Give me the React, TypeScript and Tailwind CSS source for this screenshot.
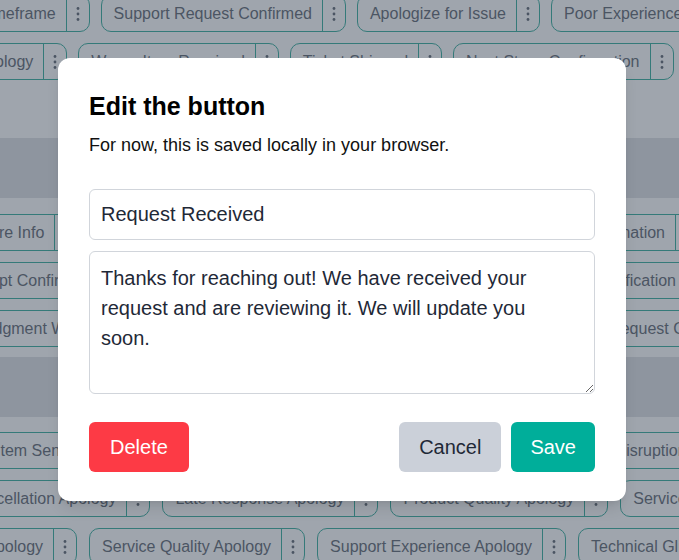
import React from "react";

type PillProps = { label: string; menu?: boolean };

const Kebab = () => (
  <svg width="4" height="16" viewBox="0 0 4 16" className="fill-current">
    <circle cx="2" cy="2.5" r="1.4" />
    <circle cx="2" cy="8" r="1.4" />
    <circle cx="2" cy="13.5" r="1.4" />
  </svg>
);

function Pill({ label, menu = true }: PillProps) {
  return (
    <div className="flex h-[37px] shrink-0 items-stretch rounded-[10px] border border-[#1f9e8f] text-[16px] text-[#4b5563]">
      <span className="flex items-center whitespace-nowrap pl-3 pr-2.5">{label}</span>
      {menu && (
        <span className="flex w-[23px] items-center justify-center border-l border-[#1f9e8f]">
          <Kebab />
        </span>
      )}
    </div>
  );
}

function Background() {
  return (
    <div className="h-[560px] w-full overflow-hidden bg-[#f3f4f6]">
      {/* top section */}
      <div className="flex h-[138px] flex-col gap-[11px]">
        <div className="-mt-[5px] -ml-[89px] flex gap-[11px]">
          <Pill label="Update Timeframe" />
          <Pill label="Support Request Confirmed" />
          <Pill label="Apologize for Issue" />
          <Pill label="Poor Experience Apology" />
        </div>
        <div className="-ml-[82px] flex gap-[11px]">
          <Pill label="Delay Apology" />
          <Pill label="Wrong Item Received" />
          <Pill label="Ticket Shipped" />
          <Pill label="Next Steps Confirmation" />
        </div>
      </div>

      <div className="h-[60px] bg-[#d1d5db]" />

      {/* middle section */}
      <div className="flex flex-col gap-[11px] pt-4 pb-[10px]">
        <div className="flex justify-between">
          <div className="-ml-[79px] flex gap-[11px]">
            <Pill label="Need More Info" />
            <Pill label="Order Status Update" />
          </div>
          <div className="-mr-[20px] flex gap-[11px]">
            <Pill label="Need Information" />
          </div>
        </div>
        <div className="flex justify-between">
          <div className="-ml-[55px] flex">
            <Pill label="Receipt Confirmation Sent" />
          </div>
          <div className="-mr-[31px] flex">
            <Pill label="Identity Verification" />
          </div>
        </div>
        <div className="flex justify-between">
          <div className="-ml-[88px] flex">
            <Pill label="Acknowledgment With Thanks" />
          </div>
          <div className="-mr-[102px] flex">
            <Pill label="Update Request Confirmed" />
          </div>
        </div>
      </div>

      <div className="h-[60px] bg-[#d1d5db]" />

      {/* bottom section */}
      <div className="flex flex-col gap-[11px] pt-[15px]">
        <div className="flex justify-between">
          <div className="-ml-[17px] flex">
            <Pill label="Item Sent Confirmation" />
          </div>
          <div className="-mr-[103px] flex">
            <Pill label="Service Disruption Apology" />
          </div>
        </div>
        <div className="-ml-[46px] flex gap-3">
          <Pill label="Cancellation Apology" />
          <Pill label="Late Response Apology" />
          <Pill label="Product Quality Apology" />
          <Pill label="Service Delay Apology" />
        </div>
        <div className="-ml-[74px] flex gap-3">
          <Pill label="Billing Apology" />
          <Pill label="Service Quality Apology" />
          <Pill label="Support Experience Apology" />
          <Pill label="Technical Glitch Apology" />
        </div>
      </div>
    </div>
  );
}

export default function App() {
  return (
    <div className="relative h-[560px] w-full overflow-hidden font-['Liberation_Sans',Arial,sans-serif]">
      <Background />

      {/* modal */}
      <div className="absolute inset-0 flex items-start bg-[rgba(75,85,99,0.5)] pt-[58px]">
        <div className="ml-[58px] w-[568px] rounded-xl bg-white px-[31px] pt-8 pb-[29px] shadow-lg">
          <h2 className="text-[25px] leading-8 font-bold text-black">Edit the button</h2>
          <p className="mt-[9px] text-[18px] leading-7 text-[#111]">
            For now, this is saved locally in your browser.
          </p>
          <input
            className="mt-[30px] block h-[51px] w-full rounded-md border border-[#d1d5db] px-[11px] text-xl text-[#1f2937] outline-none"
            defaultValue="Request Received"
          />
          <textarea
            className="mt-[11px] block h-[143px] w-full rounded-md border border-[#d1d5db] pt-[11px] pr-5 pb-2 pl-[11px] text-xl leading-[30px] text-[#1f2937] outline-none"
            defaultValue="Thanks for reaching out! We have received your request and are reviewing it. We will update you soon."
          />
          <div className="mt-7 flex items-center justify-between">
            <button className="h-[50px] rounded-md bg-[#fd3a45] px-[21px] text-xl text-white">Delete</button>
            <div className="flex gap-2.5">
              <button className="h-[50px] rounded-md bg-[#cbd0d9] px-5 text-xl text-[#1f2937]">Cancel</button>
              <button className="h-[50px] rounded-md bg-[#00ae9a] px-[19px] text-xl text-white">Save</button>
            </div>
          </div>
        </div>
      </div>
    </div>
  );
}
